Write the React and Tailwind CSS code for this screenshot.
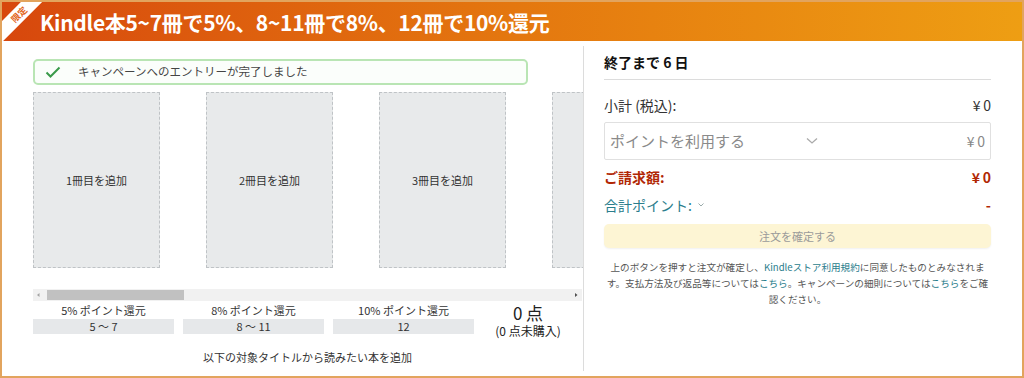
import React from "react";

const font = { fontFamily: '"Noto Sans CJK JP", "Noto Sans", sans-serif' };

function Slot({ n }) {
  return (
    <div className="w-[127px] h-[176px] shrink-0 border border-dashed border-[#bfc3c6] bg-[#e8eaeb] flex items-center justify-center text-[11px] text-[#333]">
      {n}冊目を追加
    </div>
  );
}

function Tier({ label, range }) {
  return (
    <div className="w-[141px] flex flex-col items-center">
      <div className="text-[11px] leading-[15px] text-[#333]">{label}</div>
      <div className="mt-[1px] w-full h-[15px] bg-[#e6e8ea] text-[11px] leading-[15px] text-[#333] text-center">{range}</div>
    </div>
  );
}

export default function App() {
  return (
    <div style={font} className="w-[1024px] h-[378px] border-2 border-[#e2a45e] bg-white overflow-hidden flex flex-col">
      <div className="relative h-[39px] shrink-0 bg-gradient-to-r from-[#d7470d] via-[#e4770f] to-[#ee9e13] flex items-center overflow-hidden">
        <div className="absolute left-[-15px] top-[5px] w-[64px] h-[15px] bg-white rotate-[-45deg] flex items-center justify-center">
          <span className="text-[9px] leading-[9px] font-bold text-[#e2651a]">限定</span>
        </div>
        <div className="pl-[38px] text-white font-bold text-[21px] leading-[26px] tracking-[-0.3px]">
          Kindle本5~7冊で5%、8~11冊で8%、12冊で10%還元
        </div>
      </div>
      <div className="flex flex-1 min-h-0">
        <div className="w-[581px] shrink-0 pl-[31px] pt-[18px] flex flex-col">
          <div className="w-[495px] h-[26px] rounded-[5px] border-2 border-[#b9e5b4] bg-[#fbfefb] flex items-center">
            <svg width="16" height="12" viewBox="0 0 16 12" className="ml-[10px]">
              <path d="M1.5 6.5 L5.5 10.5 L14.5 1.5" fill="none" stroke="#3a9a4a" strokeWidth="2" />
            </svg>
            <span className="ml-[17px] text-[11.5px] text-[#444]">キャンペーンへのエントリーが完了しました</span>
          </div>
          <div className="mt-[7px] w-[550px] overflow-hidden flex gap-[46px]">
            <Slot n={1} />
            <Slot n={2} />
            <Slot n={3} />
            <Slot n={4} />
          </div>
          <div className="mt-[21px] w-[549px] h-[12px] bg-[#f1f1f1] flex items-center">
            <svg width="12" height="12" viewBox="0 0 12 12" className="shrink-0">
              <path d="M6.5 4 L4 6 L6.5 8 Z" fill="#a3a3a3" />
            </svg>
            <div className="ml-[2px] w-[137px] h-[10px] bg-[#c1c1c1]" />
            <div className="flex-1" />
            <svg width="12" height="12" viewBox="0 0 12 12" className="shrink-0">
              <path d="M5 4 L7.5 6 L5 8 Z" fill="#505050" />
            </svg>
          </div>
          <div className="mt-[2px] flex">
            <div className="flex gap-[9px]">
              <Tier label="5% ポイント還元" range="5 ～ 7" />
              <Tier label="8% ポイント還元" range="8 ～ 11" />
              <Tier label="10% ポイント還元" range="12" />
            </div>
            <div className="w-[108px] flex flex-col items-center">
              <div className="text-[17px] leading-[20px] text-[#222]">0 点</div>
              <div className="text-[12px] leading-[16px] text-[#222]">(0 点未購入)</div>
            </div>
          </div>
          <div className="mt-[10px] w-[549px] text-center text-[11px] leading-[16px] text-[#333]">
            以下の対象タイトルから読みたい本を追加
          </div>
        </div>
        <div className="flex-1 my-[5px] border-l border-[#dcdcdc] pl-[20px] pr-[31px] flex flex-col">
          <div className="h-[34px] pt-[6px] text-[14px] leading-[20px] font-bold text-[#111] border-b border-[#dcdcdc]">
            終了まで 6 日
          </div>
          <div className="mt-[15px] flex justify-between items-center text-[14px] leading-[20px] text-[#333]">
            <span>小計 (税込):</span>
            <span>¥&#8201;0</span>
          </div>
          <div className="mt-[7px] h-[38px] border border-[#e0e0e0] rounded-[2px] flex items-center px-[5px] text-[15px] text-[#8a8a8a]">
            <span>ポイントを利用する</span>
            <svg width="12" height="8" viewBox="0 0 12 8" className="ml-[61px]">
              <path d="M1 1.5 L6 6 L11 1.5" fill="none" stroke="#aaa" strokeWidth="1.3" />
            </svg>
            <span className="ml-auto text-[14px] text-[#888]">¥&#8201;0</span>
          </div>
          <div className="mt-[7px] flex justify-between items-center text-[14px] leading-[20px] font-bold text-[#b12704]">
            <span>ご請求額:</span>
            <span>¥&#8201;0</span>
          </div>
          <div className="mt-[8px] flex justify-between items-center text-[14px] leading-[20px] text-[#2a7d8c]">
            <span className="flex items-center">
              合計ポイント:
              <svg width="8" height="6" viewBox="0 0 8 6" className="ml-[5px]">
                <path d="M1.5 1.5 L4 4 L6.5 1.5" fill="none" stroke="#9aa" strokeWidth="1" />
              </svg>
            </span>
            <span className="font-bold text-[#b12704]">-</span>
          </div>
          <div className="mt-[9px] h-[24px] rounded-[5px] bg-[#fdf5d4] shadow-[0_1px_2px_rgba(0,0,0,0.06)] flex items-center justify-center text-[11px] text-[#9a9a9a]">
            注文を確定する
          </div>
          <div className="mt-[11px] flex flex-col items-center text-[9.6px] leading-[16px] text-[#555] whitespace-nowrap">
            <div>
              上のボタンを押すと注文が確定し、<span className="text-[#2a7d8c]">Kindleストア利用規約</span>に同意したものとみなされま
            </div>
            <div>
              す。支払方法及び返品等については<span className="text-[#2a7d8c]">こちら</span>。キャンペーンの細則については<span className="text-[#2a7d8c]">こちら</span>をご確
            </div>
            <div>認ください。</div>
          </div>
        </div>
      </div>
    </div>
  );
}
